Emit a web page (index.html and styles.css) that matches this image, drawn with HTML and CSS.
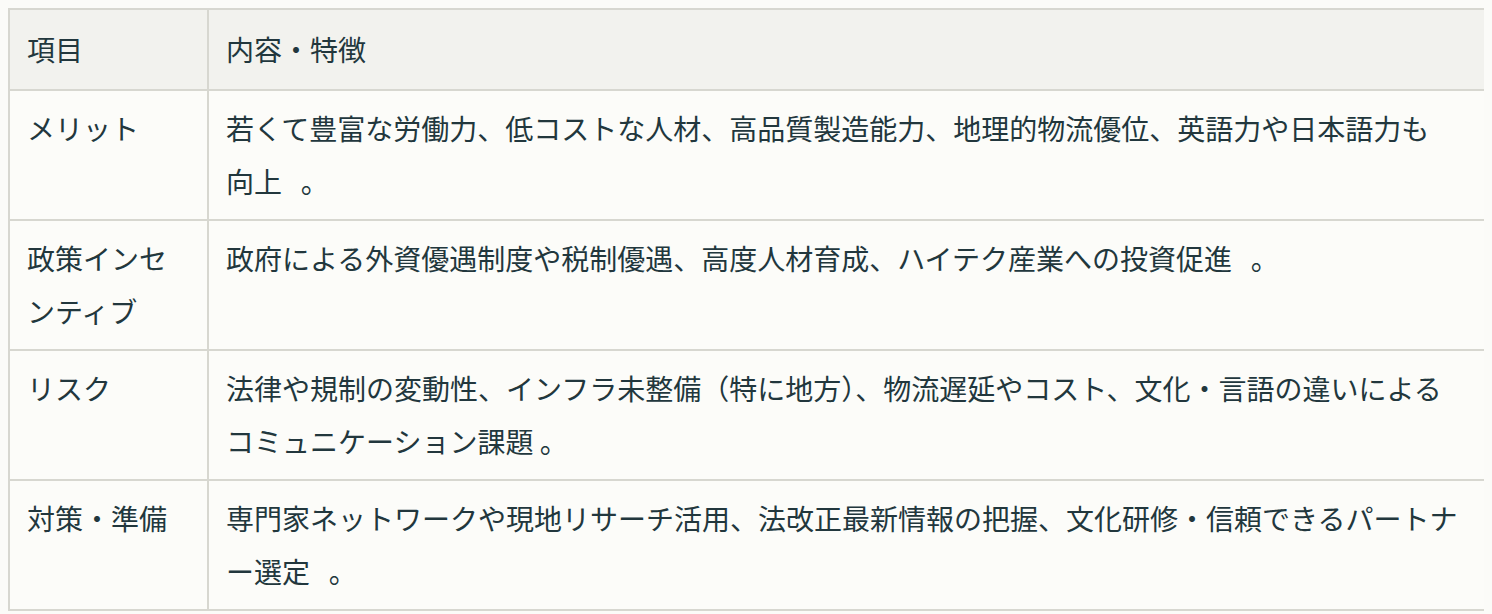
FILE: index.html
```html
<!DOCTYPE html>
<html lang="ja">
<head>
<meta charset="utf-8">
<title>項目</title>
<link rel="stylesheet" href="styles.css">
</head>
<body>
<table class="info-table">
  <colgroup>
    <col class="col-item">
    <col class="col-desc">
  </colgroup>
  <thead>
    <tr>
      <th>項目</th>
      <th>内容・特徴</th>
    </tr>
  </thead>
  <tbody>
    <tr>
      <td>メリット</td>
      <td>若くて豊富な労働力、低コストな人材、高品質製造能力、地理的物流優位、英語力や日本語力も<span class="phrase">向上</span>&nbsp;&nbsp; 。</td>
    </tr>
    <tr>
      <td>政策インセンティブ</td>
      <td>政府による外資優遇制度や税制優遇、高度人材育成、ハイテク産業への投資促進&nbsp;&nbsp; 。</td>
    </tr>
    <tr>
      <td>リスク</td>
      <td>法律や規制の変動性、インフラ未整備（特に地方）、物流遅延やコスト、文化・言語の違いによるコミュニケーション課題 。</td>
    </tr>
    <tr>
      <td>対策・準備</td>
      <td>専門家ネットワークや現地リサーチ活用、法改正最新情報の把握、文化研修・信頼できるパートナー選定&nbsp;&nbsp; 。</td>
    </tr>
  </tbody>
</table>
</body>
</html>
```

FILE: styles.css
```css
html, body {
  background: #fbfbf8;
}

body {
  margin: 8px 8px 0;
  font-family: "Noto Sans CJK JP", "Noto Sans", sans-serif;
  color: #22373d;
}

.info-table {
  width: 1480px;
  border-collapse: collapse;
  table-layout: fixed;
  border: 2px solid #d7d7d0;
  font-size: 28px;
  line-height: 53px;
}

.col-item {
  width: 199px;
}

.info-table th,
.info-table td {
  border: 2px solid #d7d7d0;
  text-align: left;
  vertical-align: top;
  font-weight: normal;
  padding: 11px 26px 11px 17px;
}

.info-table th {
  background: #f2f2ee;
  padding-top: 13px;
  padding-bottom: 13px;
}

.info-table td {
  background: #fcfcf9;
}

.info-table td:first-child {
  padding-right: 16px;
}

.phrase {
  white-space: nowrap;
}
```
